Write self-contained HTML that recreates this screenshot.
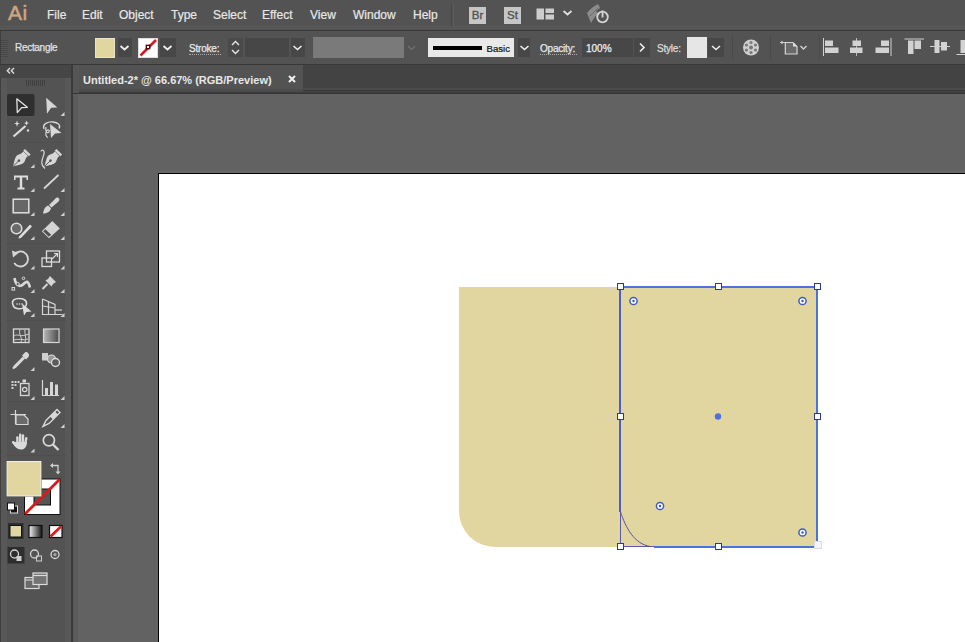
<!DOCTYPE html>
<html><head><meta charset="utf-8">
<style>
*{margin:0;padding:0;box-sizing:border-box}
html,body{width:965px;height:642px;overflow:hidden;background:#626262;font-family:"Liberation Sans",sans-serif}
.a{position:absolute}
#menubar{left:0;top:0;width:965px;height:30px;background:#535353}
#menuline{left:0;top:30px;width:965px;height:1px;background:#3a3a3a}
#menulight{left:0;top:26px;width:965px;height:1px;background:#595959}
#menulight2{left:0;top:28px;width:965px;height:1px;background:#595959}
#ctrl{left:0;top:31px;width:965px;height:33px;background:#535353}
#ctrlline{left:0;top:64px;width:965px;height:1px;background:#383838}
.mi{position:absolute;top:7px;font-size:12px;color:#e8e8e8;line-height:16px;-webkit-text-stroke:0.2px currentColor}
#tabbar{left:79px;top:65px;width:886px;height:28px;background:#434343}
#tabband{left:79px;top:88px;width:886px;height:2px;background:#4a4a4a}
#tabband2{left:79px;top:90px;width:886px;height:1px;background:#3a3a3a}
#tabband3{left:79px;top:92px;width:886px;height:1px;background:#3e3e3e}
#strip{left:73px;top:65px;width:6px;height:29px;background:#555}
#strip2{left:73px;top:94px;width:5px;height:548px;background:#5b5b5b}
#stripline{left:73px;top:93px;width:6px;height:1px;background:#353535}
#tab{left:79px;top:65px;width:224px;height:24px;background:#535353}
#tabbot{left:79px;top:89px;width:224px;height:3px;background:#4b4b4b}
#tabline{left:79px;top:93px;width:892px;height:1px;background:#353535}
#panelhdr{left:0;top:65px;width:71px;height:13px;background:#464646}
#panel{left:0;top:78px;width:72px;height:564px;background:#535353}
#panelborder{left:71px;top:65px;width:2px;height:577px;background:#3a3a3a}
#canvas{left:78px;top:94px;width:887px;height:548px;background:#626262}
#artboard{left:158px;top:173px;width:807px;height:469px;background:#fff;border-left:1px solid #000;border-top:1px solid #000}
.lbl{position:absolute;font-size:10px;color:#e0e0e0;line-height:12px;-webkit-text-stroke:0.25px currentColor}
.drk{position:absolute;background:#474747}
</style></head><body>
<div class="a" id="menubar"></div>
<div class="a" id="menulight"></div>
<div class="a" id="menulight2"></div>
<div class="a" id="menuline"></div>
<div class="a" id="ctrl"></div>
<div class="a" id="ctrlline"></div>
<div class="a" id="tabbar"></div>
<div class="a" id="tabband"></div>
<div class="a" id="tabband2"></div>
<div class="a" id="tabband3"></div>
<div class="a" id="tab"></div>
<div class="a" id="tabbot"></div>
<div class="a" id="tabline"></div>
<div class="a" id="panelhdr"></div>
<div class="a" id="panel"></div>
<div class="a" id="panelborder"></div>
<div class="a" style="left:0;top:78px;width:1px;height:564px;background:#3e3e3e"></div>
<div class="a" style="left:1px;top:78px;width:6px;height:564px;background:#585858"></div>
<div class="a" style="left:65px;top:78px;width:6px;height:564px;background:#585858"></div>
<div class="a" id="canvas"></div>
<div class="a" id="strip"></div>
<div class="a" id="strip2"></div>
<div class="a" id="stripline"></div>
<div class="a" style="left:158px;top:171px;width:807px;height:2px;background:#676767"></div>
<div class="a" id="artboard"></div>

<!-- menu -->
<div class="a" style="left:8px;top:1px;font-size:21px;color:#d0a482;line-height:24px;letter-spacing:0.5px;-webkit-text-stroke:0.5px #d0a482">Ai</div>
<div class="mi" style="left:47px">File</div>
<div class="mi" style="left:82px">Edit</div>
<div class="mi" style="left:119px">Object</div>
<div class="mi" style="left:171px">Type</div>
<div class="mi" style="left:213px">Select</div>
<div class="mi" style="left:262px">Effect</div>
<div class="mi" style="left:310px">View</div>
<div class="mi" style="left:353px">Window</div>
<div class="mi" style="left:413px">Help</div>

<!-- menu right icons -->
<div class="a" style="left:451px;top:4px;width:1px;height:22px;background:#474747"></div>
<div class="a" style="left:453px;top:4px;width:1px;height:22px;background:#5c5c5c"></div>
<div class="a" style="left:469px;top:7px;width:17px;height:17px;background:#c6c6c6;color:#505050;font-size:11.5px;line-height:17px;text-align:center;-webkit-text-stroke:0.3px #505050">Br</div>
<div class="a" style="left:504px;top:7px;width:17px;height:17px;background:#c6c6c6;color:#505050;font-size:11.5px;line-height:17px;text-align:center;-webkit-text-stroke:0.3px #505050">St</div>
<svg class="a" style="left:536px;top:8px" width="40" height="13">
  <rect x="0.5" y="0.5" width="7.5" height="11" fill="#cdcdcd"/>
  <rect x="9.5" y="0.5" width="8.5" height="4.5" fill="#cdcdcd"/>
  <rect x="9.5" y="6.5" width="8.5" height="5" fill="#cdcdcd"/>
  <path d="M27.5 3 L31.5 6.5 L35.5 3" stroke="#e0e0e0" stroke-width="1.8" fill="none"/>
</svg>
<svg class="a" style="left:585px;top:2px" width="26" height="24">
  <path d="M2 11 C5 7 9 4 13 2 L15 6 L11 9 L13 11 L9 16 L6 21 Z" fill="#8c8c8c"/>
  <path d="M5 14 L13 6" stroke="#6c6c6c" stroke-width="1"/>
  <circle cx="17.5" cy="15" r="5.3" fill="none" stroke="#d4d4d4" stroke-width="1.8"/>
  <rect x="16.6" y="8.5" width="1.9" height="7" fill="#d4d4d4"/>
</svg>

<!-- control bar -->
<div class="a" style="left:0;top:31px;width:1px;height:33px;background:#3e3e3e"></div>
<div class="a" style="left:1px;top:40px;width:7px;height:18px;background:repeating-linear-gradient(#474747 0 1px,#555 1px 2px)"></div>
<div class="lbl" style="left:15px;top:42px;font-size:10px;letter-spacing:-0.3px">Rectangle</div>
<div class="a" style="left:95px;top:38px;width:20px;height:20px;background:#e9e3c6;padding:1px"><div style="width:18px;height:18px;background:#e2d6a0"></div></div>
<div class="drk" style="left:118px;top:38px;width:14px;height:19px"></div>
<svg class="a" style="left:118px;top:38px" width="14" height="19"><path d="M2.5 8 L6.5 11.5 L10.5 8" stroke="#f0f0f0" stroke-width="1.8" fill="none"/></svg>
<div class="a" style="left:138px;top:38px;width:20px;height:20px;background:#fff;border:1px solid #ddd"></div>
<svg class="a" style="left:138px;top:38px" width="20" height="20">
  <path d="M2.5 17.5 L18 2" stroke="#d41c1c" stroke-width="2.6"/>
  <rect x="8.3" y="7.3" width="3.4" height="3.4" fill="#fff" stroke="#400" stroke-width="1.3"/>
</svg>
<div class="drk" style="left:160px;top:38px;width:16px;height:19px"></div>
<svg class="a" style="left:160px;top:38px" width="16" height="19"><path d="M3.5 8 L7.5 11.5 L11.5 8" stroke="#f0f0f0" stroke-width="1.8" fill="none"/></svg>

<div class="lbl" style="left:189px;top:43px;font-size:10px;color:#e8e8e8;letter-spacing:-0.2px">Stroke:</div>
<div class="a" style="left:189px;top:54px;width:32px;height:1px;border-top:1px dotted #aaa"></div>
<div class="drk" style="left:228px;top:38px;width:15px;height:19px;background:#4a4a4a"></div>
<svg class="a" style="left:228px;top:38px" width="15" height="19"><path d="M4 7 L7.5 3.5 L11 7 M4 12 L7.5 15.5 L11 12" stroke="#e6e6e6" stroke-width="1.4" fill="none"/></svg>
<div class="drk" style="left:245px;top:38px;width:44px;height:19px"></div>
<div class="drk" style="left:291px;top:38px;width:14px;height:19px"></div>
<svg class="a" style="left:290px;top:38px" width="15" height="19"><path d="M3.5 8 L7.5 11.5 L11.5 8" stroke="#eee" stroke-width="1.6" fill="none"/></svg>
<div class="a" style="left:313px;top:37px;width:91px;height:21px;background:#7a7a7a"></div>
<svg class="a" style="left:404px;top:37px" width="15" height="21"><path d="M4 9 L7.5 12.5 L11 9" stroke="#6e6e6e" stroke-width="1.4" fill="none"/></svg>

<div class="a" style="left:428px;top:38px;width:86px;height:19px;background:#e9e9e9"></div>
<div class="a" style="left:433px;top:46px;width:49px;height:3.5px;background:#000"></div>
<div class="a" style="left:486.5px;top:43px;font-size:9.6px;color:#111;line-height:12px;-webkit-text-stroke:0.2px #111">Basic</div>
<div class="drk" style="left:518px;top:38px;width:12px;height:19px"></div>
<svg class="a" style="left:516.5px;top:38px" width="15" height="19"><path d="M3.5 8 L7.5 11.5 L11.5 8" stroke="#eee" stroke-width="1.6" fill="none"/></svg>

<div class="lbl" style="left:540px;top:43px;font-size:10px;color:#e8e8e8;letter-spacing:-0.2px">Opacity:</div>
<div class="a" style="left:540px;top:54px;width:37px;height:1px;border-top:1px dotted #aaa"></div>
<div class="drk" style="left:582px;top:38px;width:51px;height:19px"></div>
<div class="lbl" style="left:586px;top:43px;font-size:10px;color:#eee">100%</div>
<div class="drk" style="left:634px;top:38px;width:16px;height:19px"></div>
<svg class="a" style="left:634px;top:38px" width="16" height="19"><path d="M6 5.5 L10 9.5 L6 13.5" stroke="#eee" stroke-width="1.6" fill="none"/></svg>
<div class="lbl" style="left:657px;top:43px;font-size:10px;color:#ddd;letter-spacing:-0.2px">Style:</div>
<div class="a" style="left:687px;top:37px;width:20px;height:21px;background:#e6e6e6"></div>
<div class="drk" style="left:708px;top:38px;width:16px;height:19px"></div>
<svg class="a" style="left:708px;top:38px" width="16" height="19"><path d="M4 8 L8 11.5 L12 8" stroke="#eee" stroke-width="1.6" fill="none"/></svg>

<div class="a" style="left:732px;top:35px;width:1px;height:25px;background:#4a4a4a"></div>
<svg class="a" style="left:740px;top:38px" width="22" height="20">
  <circle cx="11" cy="9.5" r="8" fill="#cfcfcf"/>
  <circle cx="11" cy="9.5" r="2" fill="#777"/>
  <g fill="#7a7a7a">
    <circle cx="11" cy="4.5" r="1.6"/><circle cx="11" cy="14.5" r="1.6"/>
    <circle cx="6.5" cy="7" r="1.6"/><circle cx="15.5" cy="7" r="1.6"/>
    <circle cx="6.5" cy="12" r="1.6"/><circle cx="15.5" cy="12" r="1.6"/>
  </g>
</svg>
<div class="a" style="left:770px;top:35px;width:1px;height:25px;background:#4a4a4a"></div>
<svg class="a" style="left:778px;top:36px" width="32" height="22">
  <path d="M7.3 6.5 H15 L19 10.5 V18 H7.3 Z" fill="#6a6a6a" stroke="#d4d4d4" stroke-width="1.2"/>
  <path d="M15 6.5 V10.5 H19 Z" fill="#e0e0e0"/>
  <path d="M2.5 6.5 H7" stroke="#cfcfcf" stroke-width="1"/>
  <path d="M2 6.5 L4.5 4.5 V8.5 Z" fill="#cfcfcf"/>
  <path d="M22.5 10 L25.5 13 L28.5 10" stroke="#cfcfcf" stroke-width="1.5" fill="none"/>
</svg>
<div class="a" style="left:819px;top:35px;width:1px;height:25px;background:#4a4a4a"></div>
<svg class="a" style="left:815px;top:32px" width="150" height="30">
  <g fill="#d2d2d2">
    <rect x="8" y="6" width="1" height="18"/>
    <rect x="10" y="8.5" width="8" height="5.5"/>
    <rect x="10" y="15.5" width="13.5" height="5.5"/>
    <rect x="41" y="6" width="1" height="18" fill="#bbb"/>
    <rect x="37.5" y="8.5" width="8.5" height="5.5"/>
    <rect x="35" y="15.5" width="12.5" height="5.5"/>
    <rect x="75.5" y="6" width="1" height="18"/>
    <rect x="66" y="8.5" width="8" height="5.5"/>
    <rect x="60.5" y="15.5" width="13.5" height="5.5"/>
    <rect x="89.5" y="6.5" width="19.5" height="1"/>
    <rect x="93" y="8.5" width="5.5" height="13.5"/>
    <rect x="99.5" y="8.5" width="6.5" height="8.5"/>
    <rect x="115" y="14" width="20" height="1"/>
    <rect x="119.5" y="8" width="5" height="13"/>
    <rect x="126" y="10" width="6" height="8.5"/>
    <rect x="141.5" y="22" width="10" height="1"/>
    <rect x="145.5" y="8" width="6" height="13"/>
  </g>
</svg>


<!-- tool panel -->
<svg class="a" style="left:0;top:0" width="72" height="642">
  <!-- header arrows -->
  <path d="M10 68 L7.3 70.7 L10 73.4 M14 68 L11.3 70.7 L14 73.4" fill="none" stroke="#dcdcdc" stroke-width="1.4"/>
  <!-- grip -->
  <g fill="#404040"><rect x="26" y="80" width="1" height="6"/><rect x="28" y="80" width="1" height="6"/><rect x="30" y="80" width="1" height="6"/><rect x="32" y="80" width="1" height="6"/><rect x="34" y="80" width="1" height="6"/><rect x="36" y="80" width="1" height="6"/><rect x="38" y="80" width="1" height="6"/><rect x="40" y="80" width="1" height="6"/><rect x="42" y="80" width="1" height="6"/><rect x="44" y="80" width="1" height="6"/></g>
  <!-- group separators -->
  <g fill="#4f4f4f"><rect x="6" y="142" width="60" height="1"/><rect x="6" y="243" width="60" height="1"/><rect x="6" y="320" width="60" height="1"/><rect x="6" y="401" width="60" height="1"/><rect x="6" y="455" width="60" height="1"/></g>
  <!-- selected bg -->
  <rect x="7" y="94" width="27.5" height="22" rx="2" fill="#2f2f2f"/>
  <!-- selection -->
  <path d="M16.8 98.8 L27.3 107.3 L21.6 107.6 L17.3 112.6 Z" fill="none" stroke="#e4e4e4" stroke-width="1.3" stroke-linejoin="round"/>
  <!-- direct selection -->
  <path d="M46.2 97.7 L57.4 107.4 L51.2 107.8 L47 113.8 Z" fill="#d6d6d6"/>
  <g fill="#cfcfcf">
    <path d="M64.5 112 V116 H60.5 Z"/>
    <path d="M34.5 164 V168 H30.5 Z"/>
    <path d="M34.5 188 V192 H30.5 Z"/><path d="M64.5 188 V192 H60.5 Z"/>
    <path d="M34.5 212 V216 H30.5 Z"/><path d="M64.5 212 V216 H60.5 Z"/>
    <path d="M34.5 236 V240 H30.5 Z"/><path d="M64.5 236 V240 H60.5 Z"/>
    <path d="M34.5 265.5 V269.5 H30.5 Z"/><path d="M64.5 265.5 V269.5 H60.5 Z"/>
    <path d="M34.5 289 V293 H30.5 Z"/><path d="M64.5 289 V293 H60.5 Z"/>
    <path d="M34.5 313 V317 H30.5 Z"/><path d="M64.5 313 V317 H60.5 Z"/>
    <path d="M34.5 367 V371 H30.5 Z"/>
    <path d="M34.5 396 V400 H30.5 Z"/><path d="M64.5 396 V400 H60.5 Z"/>
    <path d="M64.5 424 V428 H60.5 Z"/>
    <path d="M34.5 448.5 V452.5 H30.5 Z"/>
  </g>
  <!-- magic wand -->
  <path d="M13.5 136.5 L25.5 126" stroke="#dcdcdc" stroke-width="2.2"/>
  <g fill="#dcdcdc">
    <path d="M17 120.5 L17.8 123 L20 123.5 L17.8 124.2 L17 127 L16.2 124.2 L14 123.5 L16.2 123 Z"/>
    <path d="M26.5 120.5 L27.3 122.5 L29 123 L27.3 123.7 L26.5 125.5 L25.7 123.7 L24 123 L25.7 122.5 Z"/>
    <circle cx="28" cy="130.5" r="1.2"/>
  </g>
  <!-- lasso -->
  <path d="M44 129 C42 124 48 121.5 53 122 C58 122.5 61 125 59 128.5" fill="none" stroke="#d8d8d8" stroke-width="1.4"/>
  <path d="M46 127 C45 131 47 134 49 132 C50 130 48 129 46.5 131 C45 134 46 137 48 137.5" fill="none" stroke="#d8d8d8" stroke-width="1.2"/>
  <path d="M50 124 L61.5 133 L55 133.5 L51 138 Z" fill="#d8d8d8"/>
  <!-- pen -->
  <g transform="translate(20,159.5) rotate(45)">
    <path d="M-3.2 -8 H3.2 V-5.5 L5 -1 C5 3 2 6 0 10 C-2 6 -5 3 -5 -1 L-3.2 -5.5 Z" fill="#d6d6d6"/>
    <rect x="-4" y="-11" width="8" height="2.5" fill="#d6d6d6"/>
    <path d="M0 0.5 V10" stroke="#555" stroke-width="0.9"/><circle cx="0" cy="1.5" r="1.3" fill="#555"/>
  </g>
  <!-- curvature pen -->
  <g transform="translate(51.5,159.5) rotate(45)">
    <path d="M-3.2 -8 H3.2 V-5.5 L5 -1 C5 3 2 6 0 10 C-2 6 -5 3 -5 -1 L-3.2 -5.5 Z" fill="#d6d6d6"/>
    <rect x="-4" y="-11" width="8" height="2.5" fill="#d6d6d6"/>
    <path d="M0 0.5 V10" stroke="#555" stroke-width="0.9"/><circle cx="0" cy="1.5" r="1.3" fill="#555"/>
  </g>
  <path d="M45 168.5 C39 164 43 158 44 154 C45 150 41.5 149 41 151.5" fill="none" stroke="#d6d6d6" stroke-width="1.2"/>
  <!-- type -->
  <path d="M14 175.5 H28 V180 H26.5 V177.5 H22.2 V187.5 H24.5 V189.5 H17.5 V187.5 H19.8 V177.5 H15.5 V180 H14 Z" fill="#dedede"/>
  <!-- line -->
  <path d="M44 188.5 L58.5 175" stroke="#d6d6d6" stroke-width="1.8"/>
  <!-- rect -->
  <rect x="13.2" y="199.2" width="15.6" height="13.6" fill="#676767" stroke="#e0e0e0" stroke-width="1.5"/>
  <!-- paintbrush -->
  <path d="M58.5 198 C60 199 59.5 200.5 58 202 L51.5 207.5 L49 205 L55 199 C56.5 197.5 57.5 197.3 58.5 198 Z" fill="#d6d6d6"/>
  <path d="M48.2 205.5 L51 208.3 C50 212 47 213.5 43 213.5 C43.5 210 45 206.5 48.2 205.5 Z" fill="#d6d6d6"/>
  <!-- shaper -->
  <circle cx="16.5" cy="228.5" r="5.3" fill="#6a6a6a" stroke="#dcdcdc" stroke-width="1.5"/>
  <path d="M19 236.5 L30 224.5 L32 226.5 L21 238 L18.5 238.5 Z" fill="#dcdcdc"/>
  <!-- eraser -->
  <path d="M52.3 221 L59.8 228.5 L49 238.3 L41.8 231.2 Z" fill="#d4d4d4"/>
  <path d="M45.3 229.2 L51.2 234.8 L48.8 236.8 L43.2 231.3 Z" fill="#505050"/>
  <!-- rotate -->
  <path d="M14.5 254.5 A7.5 7.5 0 1 1 14.2 263" fill="none" stroke="#d6d6d6" stroke-width="1.8"/>
  <path d="M12 250.5 L18.5 253 L13 257.5 Z" fill="#d6d6d6"/>
  <!-- scale -->
  <rect x="46.5" y="251" width="13" height="11" fill="none" stroke="#dcdcdc" stroke-width="1.3"/>
  <rect x="42" y="258" width="9.5" height="8.5" fill="none" stroke="#dcdcdc" stroke-width="1.3"/>
  <path d="M52 259 L57.5 253.5 M54 253.5 H57.5 V257" stroke="#dcdcdc" stroke-width="1.2" fill="none"/>
  <!-- width -->
  <path d="M14.5 278 C15 283 18 287 21.5 285.5 C24.5 284 25.5 281 27.5 282 C29 283 29.5 286 30 287.5" fill="none" stroke="#d8d8d8" stroke-width="2.6"/>
  <circle cx="17.7" cy="284" r="1.6" fill="#5a5a5a" stroke="#d8d8d8" stroke-width="1"/>
  <circle cx="23.5" cy="278.3" r="1.3" fill="none" stroke="#d8d8d8" stroke-width="1"/>
  <rect x="12" y="287.5" width="2.6" height="2.6" fill="none" stroke="#d8d8d8" stroke-width="1"/>
  <!-- puppet warp / pin -->
  <path d="M50 276 L56 282 L53 284 L51.5 286.5 L45.5 280.5 L48 279 Z" fill="#d4d4d4"/>
  <path d="M47.5 284 L42.5 289" stroke="#d4d4d4" stroke-width="2"/>
  <!-- shape builder -->
  <path d="M13 305 C11 300 15 298.5 19 298.5 C23 298.5 27 300 26.5 304 C26 308 21 309.5 17 308.5 C14.5 308 13.5 307 13 305 Z" fill="none" stroke="#dcdcdc" stroke-width="1.5"/>
  <g fill="#dcdcdc"><circle cx="17" cy="304" r="0.8"/><circle cx="19.5" cy="304" r="0.8"/><circle cx="22" cy="304" r="0.8"/></g>
  <path d="M22 303.5 L31.5 311.5 L26.5 312 L24 315.5 Z" fill="#dcdcdc"/>
  <!-- perspective grid -->
  <g stroke="#d6d6d6" stroke-width="1.2" fill="none">
    <path d="M42.5 299 V314.5 H62.5"/>
    <path d="M42.5 299 L55 304.5 V314.5"/>
    <path d="M48.5 301.5 V314.5"/>
    <path d="M42.5 306 L55 308"/>
    <path d="M55 310 H62"/>
  </g>
  <!-- mesh -->
  <rect x="13.5" y="329" width="15.5" height="13.5" fill="none" stroke="#dcdcdc" stroke-width="1.3"/>
  <path d="M14 336 C18 333 20 338 28.5 334 M20 329.5 C18 334 23 338 21 342 M14 340 C17 338 24 341 28 339 M25 329.5 C24 333 27 337 25 342" fill="none" stroke="#cfcfcf" stroke-width="1"/>
  <!-- gradient -->
  <defs><linearGradient id="g1" x1="0" x2="1"><stop offset="0" stop-color="#b8b8b8"/><stop offset="1" stop-color="#4a4a4a"/></linearGradient>
  <linearGradient id="g2" x1="0" x2="1"><stop offset="0" stop-color="#f4f4f4"/><stop offset="1" stop-color="#111"/></linearGradient></defs>
  <rect x="43.5" y="329" width="15.5" height="13.5" fill="url(#g1)" stroke="#d8d8d8" stroke-width="1.2"/>
  <!-- eyedropper -->
  <path d="M27.5 352.5 C29.5 354 29.5 356 28 357.5 L26 359.5 L22 355.5 L24 353.5 C25.3 352 26.5 351.7 27.5 352.5 Z" fill="#d8d8d8"/>
  <path d="M23.5 357 L14.5 366 L13 368.5 L15.5 367 L24.5 358" fill="none" stroke="#d8d8d8" stroke-width="1.6"/>
  <!-- blend -->
  <rect x="42" y="353" width="6" height="7.5" fill="#cfcfcf"/>
  <circle cx="51.5" cy="359" r="4" fill="#999" stroke="#dcdcdc" stroke-width="1.2"/>
  <circle cx="55.5" cy="362.5" r="4" fill="#5c5c5c" stroke="#dcdcdc" stroke-width="1.4"/>
  <!-- symbol sprayer -->
  <g fill="#cfcfcf"><rect x="11.5" y="381" width="2" height="2"/><rect x="14.5" y="381" width="2" height="2"/><rect x="17.5" y="381" width="2" height="2"/><rect x="11.5" y="384" width="2" height="2"/><rect x="14.5" y="384" width="2" height="2"/><rect x="11.5" y="387" width="2" height="2"/></g>
  <rect x="22.5" y="379.5" width="3.5" height="3" fill="#d8d8d8"/>
  <rect x="20.5" y="383.5" width="8.5" height="12" fill="none" stroke="#d8d8d8" stroke-width="1.3"/>
  <circle cx="24.7" cy="389.5" r="2.2" fill="none" stroke="#d8d8d8" stroke-width="1.2"/>
  <!-- graph -->
  <path d="M42.5 380 V395.5 H59" fill="none" stroke="#d6d6d6" stroke-width="1.2"/>
  <g fill="#d6d6d6"><rect x="45" y="388" width="3" height="7"/><rect x="50" y="382" width="3" height="13"/><rect x="55" y="384.5" width="3" height="10.5"/></g>
  <!-- artboard -->
  <path d="M10.5 414.5 H26 M15.5 410 V424" stroke="#d8d8d8" stroke-width="1.2"/>
  <path d="M16 415 H24 L28 419 V424.5 H16 Z" fill="#6a6a6a" stroke="#d8d8d8" stroke-width="1.2"/>
  <!-- slice -->
  <path d="M57 409.5 L60 412.5 L49 423.5 L43 426.5 L46 420.5 Z" fill="none" stroke="#d8d8d8" stroke-width="1.4"/>
  <path d="M55 411.5 L58 414.5 L53 419.5 L50 416.5 Z" fill="#d8d8d8"/>
  <!-- hand -->
  <g fill="#dadada">
    <rect x="16.2" y="436.3" width="2.4" height="8" rx="1.2"/>
    <rect x="19" y="433.5" width="2.4" height="10" rx="1.2"/>
    <rect x="21.8" y="434.3" width="2.4" height="9" rx="1.2"/>
    <rect x="24.6" y="437" width="2.3" height="8" rx="1.15" transform="rotate(12 25.7 441)"/>
    <path d="M15.5 442 H27 C27 446 25 449.6 21 449.6 C18 449.6 16.5 448 14.5 446 L12 442.8 C11.5 441.5 12.8 440.6 14 441.4 Z"/>
  </g>
  <!-- zoom -->
  <circle cx="48.9" cy="440.3" r="5.6" fill="none" stroke="#d8d8d8" stroke-width="1.7"/>
  <path d="M53 444.5 L58.5 450" stroke="#d8d8d8" stroke-width="2.4"/>

  <!-- stroke swatch -->
  <rect x="24.5" y="479" width="35.5" height="35.5" fill="#fff" stroke="#111" stroke-width="1"/>
  <rect x="34" y="489" width="16.5" height="16" fill="#555" stroke="#111" stroke-width="1"/>
  <path d="M25 514 L59.5 479.5" stroke="#d91a1a" stroke-width="2.8"/>
  <!-- fill swatch -->
  <rect x="6.5" y="461" width="35" height="35.5" fill="#111"/>
  <rect x="7" y="461.5" width="34" height="34.5" fill="#e2d6a0" stroke="#f0f0e6" stroke-width="1"/>
  <!-- swap -->
  <path d="M51 465.5 H58 V472.5" fill="none" stroke="#cfcfcf" stroke-width="1.3"/>
  <path d="M50 465.5 L53 463 V468 Z M58 474.5 L55.5 471.5 H60.5 Z" fill="#cfcfcf"/>
  <!-- default -->
  <rect x="10.5" y="506" width="7" height="7" fill="#111" stroke="#ddd" stroke-width="1"/>
  <rect x="7.5" y="503" width="7" height="7" fill="#fff" stroke="#111" stroke-width="1"/>
  <!-- color/gradient/none -->
  <rect x="8" y="523" width="15.5" height="16" fill="#2e2e2e"/>
  <rect x="10" y="525.5" width="11.5" height="11.5" fill="#e2d6a0" stroke="#111" stroke-width="1"/>
  <rect x="29" y="525.5" width="13" height="12" fill="url(#g2)" stroke="#111" stroke-width="1.2"/>
  <rect x="49.5" y="525.5" width="12.5" height="12" fill="#fff" stroke="#111" stroke-width="1.2"/>
  <path d="M50.5 536.5 L61 526.5" stroke="#e01818" stroke-width="2.6"/>
  <!-- draw modes -->
  <rect x="7.5" y="547" width="17" height="16.5" fill="#2e2e2e"/>
  <circle cx="14.5" cy="554" r="4" fill="none" stroke="#d4d4d4" stroke-width="1.3"/>
  <rect x="16.5" y="556" width="5" height="5" fill="#cfcfcf"/>
  <circle cx="34.5" cy="554" r="4" fill="none" stroke="#d4d4d4" stroke-width="1.3"/>
  <rect x="36.5" y="556" width="5" height="5" fill="none" stroke="#cfcfcf" stroke-width="1"/>
  <circle cx="55" cy="554.5" r="4" fill="none" stroke="#d4d4d4" stroke-width="1.3"/>
  <circle cx="55" cy="554.5" r="1.6" fill="#aaa"/>
  <!-- screen mode -->
  <rect x="25" y="577.5" width="14" height="11" fill="#6a6a6a" stroke="#dcdcdc" stroke-width="1.2"/>
  <path d="M25 580 H33" stroke="#dcdcdc" stroke-width="1"/>
  <rect x="33" y="573" width="14" height="11.5" fill="#747474" stroke="#dcdcdc" stroke-width="1.2"/>
  <path d="M33 575.5 H47" stroke="#dcdcdc" stroke-width="1.2"/>
</svg>

<!-- tab -->
<div class="a" style="left:83px;top:73px;font-size:11px;font-weight:bold;color:#e8e8e8;line-height:14px">Untitled-2* @ 66.67% (RGB/Preview)</div>
<svg class="a" style="left:286px;top:73px" width="12" height="12"><path d="M3 3 L9 9 M9 3 L3 9" stroke="#f0f0f0" stroke-width="2"/></svg>

<!-- shape -->
<svg class="a" style="left:0;top:0" width="965" height="642">
  <path d="M459 287 H817 V547 H495 A36 36 0 0 1 459 511 Z" fill="#e2d6a0"/>
  <g fill="#4c72df">
    <rect x="620" y="286" width="198" height="2"/>
    <rect x="816" y="286" width="2" height="261"/>
    <rect x="654" y="546" width="164" height="2"/>
  </g>
  <rect x="619" y="286" width="2" height="226" fill="#4e5fc4"/>
  <rect x="620" y="512" width="1" height="35" fill="#5a5aa8"/>
  <rect x="620" y="546" width="34" height="1" fill="#5a5aa8"/>
  <path d="M620.3 511.5 C626 528 634 544 650.5 546.5" fill="none" stroke="#5454a0" stroke-width="1"/>
  <g fill="#fff" stroke="#2e3a80" stroke-width="1">
    <rect x="617.5" y="283.5" width="6" height="6"/>
    <rect x="715.5" y="283.5" width="6" height="6"/>
    <rect x="814.5" y="283.5" width="6" height="6"/>
    <rect x="617.5" y="413.5" width="6" height="6"/>
    <rect x="814.5" y="413.5" width="6" height="6"/>
    <rect x="617.5" y="543.5" width="6" height="6"/>
    <rect x="715.5" y="543.5" width="6" height="6"/>
  </g>
  <rect x="814.5" y="541.5" width="7" height="7" fill="#f4f4f8" stroke="#dcdce8" stroke-width="1"/>
  <circle cx="718" cy="416.5" r="3.2" fill="#4d70e4"/>
  <g fill="#fff" stroke="#3f5ac4" stroke-width="1.5">
    <circle cx="633.5" cy="301" r="3.6"/>
    <circle cx="802.5" cy="301" r="3.6"/>
    <circle cx="660" cy="506" r="3.6"/>
    <circle cx="802.5" cy="532.5" r="3.6"/>
  </g>
  <g fill="#3a55c0">
    <circle cx="633.5" cy="301" r="1.2"/>
    <circle cx="802.5" cy="301" r="1.2"/>
    <circle cx="660" cy="506" r="1.2"/>
    <circle cx="802.5" cy="532.5" r="1.2"/>
  </g>
</svg>
</body></html>
